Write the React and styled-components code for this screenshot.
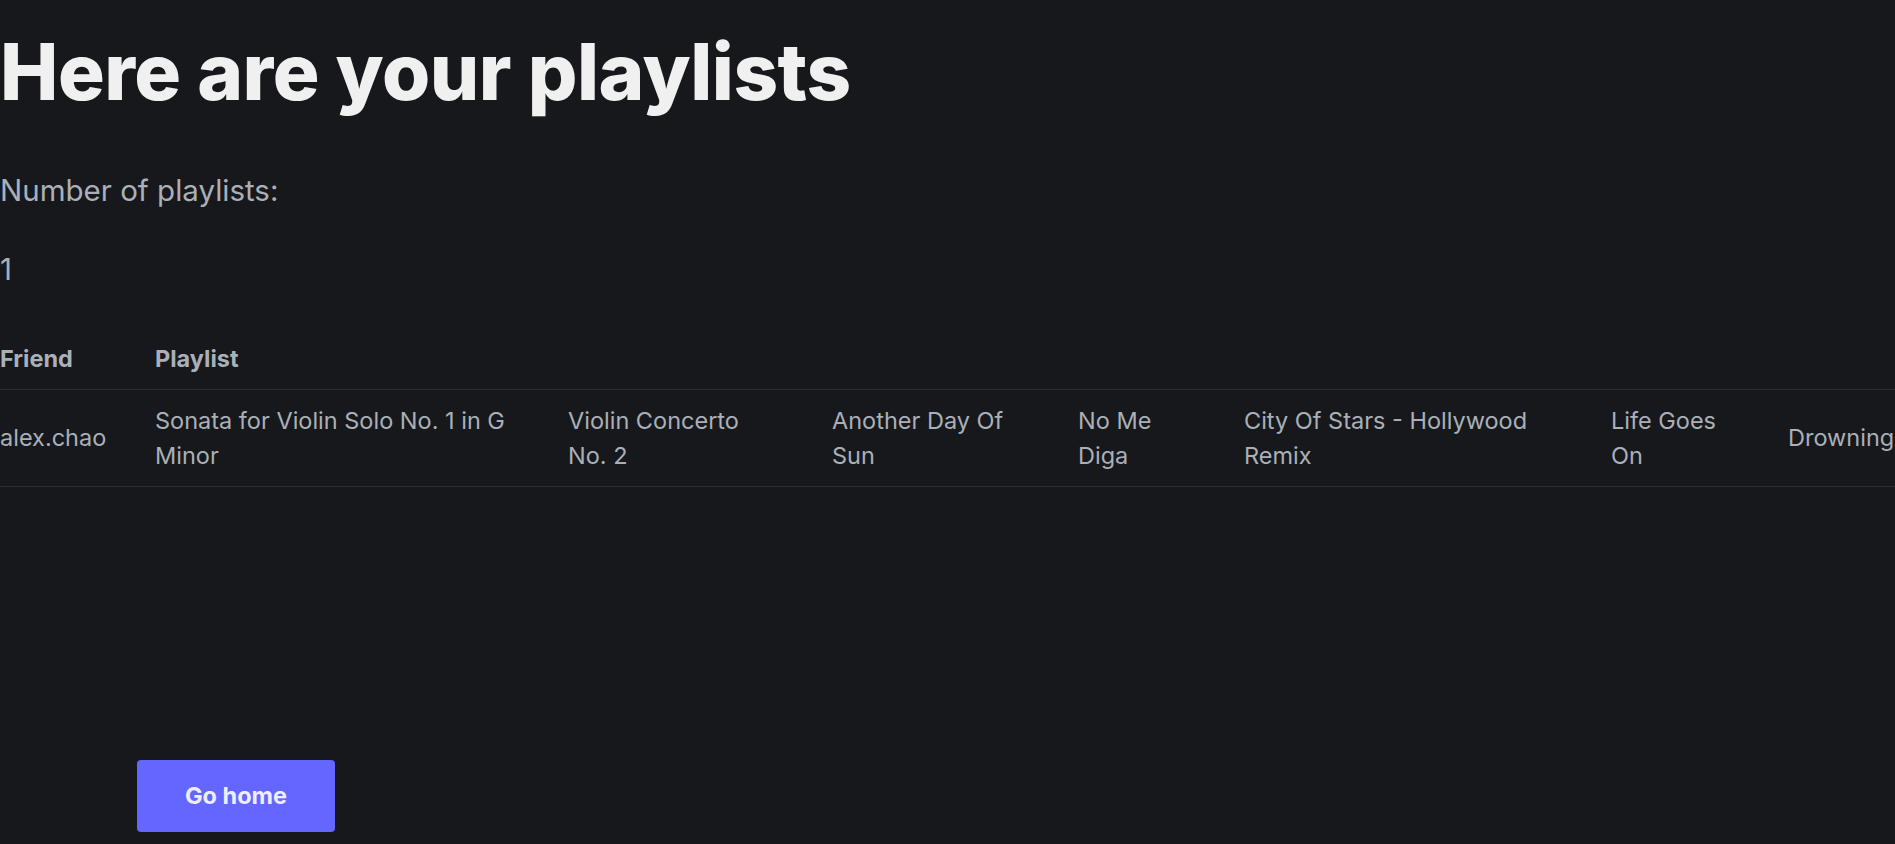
import styled, { createGlobalStyle } from "styled-components";

const songs = [
  "Sonata for Violin Solo No. 1 in G Minor",
  "Violin Concerto No. 2",
  "Another Day Of Sun",
  "No Me Diga",
  "City Of Stars - Hollywood Remix",
  "Life Goes On",
  "Drowning",
  "Blinding Lights",
  "Clair de Lune",
];

const widths = [155, 413, 264, 246, 166, 367, 177, 220, 220, 220];

export default function App() {
  return (
    <Page>
      <GlobalStyle />
      <Title>Here are your playlists</Title>
      <Text>Number of playlists:</Text>
      <Text>1</Text>
      <Table>
        <colgroup>
          {widths.map((w, i) => (
            <col key={i} style={{ width: w }} />
          ))}
        </colgroup>
        <thead>
          <tr>
            <Th>Friend</Th>
            <Th colSpan={songs.length}>Playlist</Th>
          </tr>
        </thead>
        <tbody>
          <Row>
            <Td>alex.chao</Td>
            {songs.map((s) => (
              <Td key={s}>{s}</Td>
            ))}
          </Row>
        </tbody>
      </Table>
      <HomeButton>Go home</HomeButton>
    </Page>
  );
}

const GlobalStyle = createGlobalStyle`
  html, body {
    margin: 0;
    background: #17181b;
    overflow: hidden;
  }
`;

const Page = styled.div`
  min-height: 844px;
  background: #17181b;
  font-family: Inter, "Noto Sans", sans-serif;
  color: #a9b0b9;
  overflow: hidden;
`;

const Title = styled.h1`
  margin: 29px 0 55px;
  font-size: 78px;
  line-height: 1.1;
  font-weight: 800;
  letter-spacing: -0.5px;
  color: #f0f0f0;
  white-space: nowrap;
`;

const Text = styled.p`
  margin: 38px 0;
  font-size: 29.5px;
  line-height: 41.6px;
`;

const Table = styled.table`
  table-layout: fixed;
  border-collapse: collapse;
  width: 2448px;
  font-size: 23.5px;
  line-height: 35px;
  text-align: left;
`;

const Th = styled.th`
  padding: 12px 52px 13px 0;
  font-weight: 700;
  color: #a9b0b9;
`;

const Row = styled.tr`
  border-top: 1px solid #2c2e33;
  border-bottom: 1px solid #2c2e33;
`;

const Td = styled.td`
  padding: 13px 52px 13px 0;
  vertical-align: middle;
`;

const HomeButton = styled.button`
  display: block;
  margin: 273px 0 0 137px;
  width: 198px;
  height: 72px;
  border: none;
  border-radius: 4px;
  background: #6366ff;
  color: #eeeeff;
  font-family: Inter, "Noto Sans", sans-serif;
  font-size: 23.5px;
  font-weight: 700;
  cursor: pointer;
`;
